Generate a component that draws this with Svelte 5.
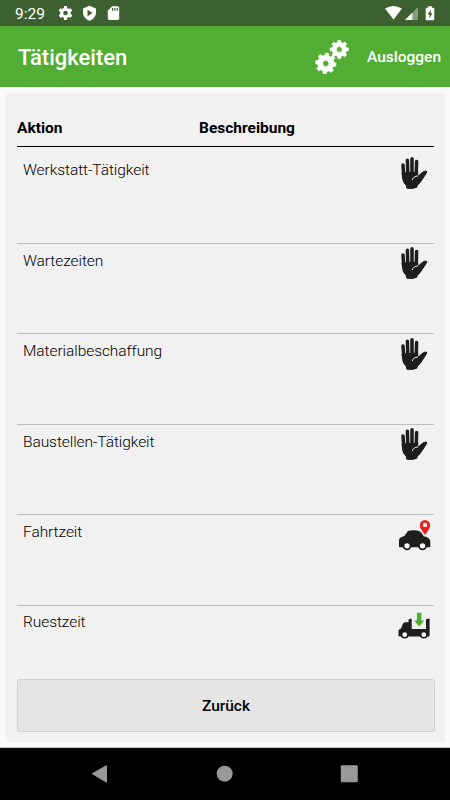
<script>
  const rows = [
    { label: 'Werkstatt-Tätigkeit', icon: 'hand' },
    { label: 'Wartezeiten', icon: 'hand' },
    { label: 'Materialbeschaffung', icon: 'hand' },
    { label: 'Baustellen-Tätigkeit', icon: 'hand' },
    { label: 'Fahrtzeit', icon: 'car' },
    { label: 'Ruestzeit', icon: 'truck' }
  ];

  // Outline of a gear with n teeth and a round hole in the middle
  function gear(cx, cy, outer, inner, hole, n, turn = 0) {
    const step = (Math.PI * 2) / n;
    const pts = [];
    for (let i = 0; i < n; i++) {
      for (const [r, a] of [[inner, -0.3], [outer, -0.2], [outer, 0.2], [inner, 0.3]]) {
        const t = turn + (i + a) * step;
        pts.push(`${(cx + r * Math.cos(t)).toFixed(2)} ${(cy + r * Math.sin(t)).toFixed(2)}`);
      }
    }
    return `M${pts.join('L')}ZM${cx - hole} ${cy}a${hole} ${hole} 0 1 0 ${hole * 2} 0a${hole} ${hole} 0 1 0 ${-hole * 2} 0Z`;
  }
</script>

<div class="screen">
  <div class="status">
    <span class="time">9:29</span>
    <svg class="left-icons" width="64" height="16" viewBox="0 0 64 16" fill="#fff" fill-rule="evenodd">
      <path d={gear(7.5, 8, 7.1, 5.3, 2.3, 6, Math.PI / 6)} />
      <path d="M31.5 .8L38 3.4V7.6C38 11.4 35.2 14.5 31.5 15.8C27.8 14.5 25 11.4 25 7.6V3.4ZM29.5 4.8V11.2L34.6 8Z" />
      <path d="M54.3 1.3H59.7Q61.2 1.3 61.2 2.8V13.6Q61.2 15 59.7 15H51.3Q49.8 15 49.8 13.6V5.4ZM54 3V5.8H55.2V3ZM56.3 3V5.8H57.5V3ZM58.6 3V5.8H59.8V3Z" />
    </svg>
    <svg class="right-icons" width="52" height="16" viewBox="0 0 52 16" fill="#fff">
      <path d="M0 3.4Q8.5 -1.6 17 3.4L8.5 14.4Z" />
      <path d="M33 2V15H20Z" opacity=".38" />
      <path d="M27.3 7.7V15H20Z" />
      <path fill-rule="evenodd" d="M43.2 1.3H46.8V2.7H48.3Q49.3 2.7 49.3 3.7V14.3Q49.3 15.3 48.3 15.3H41.7Q40.7 15.3 40.7 14.3V3.7Q40.7 2.7 41.7 2.7H43.2ZM45.7 4.8L42.6 9.6H44.5V13.2L47.5 8.2H45.7Z" />
    </svg>
  </div>

  <header>
    <h1>Tätigkeiten</h1>
    <svg width="36" height="36" viewBox="0 0 36 36" fill="#fff" fill-rule="evenodd" stroke="#fff" stroke-width=".7" stroke-linejoin="round">
      <path d={gear(11.8, 24.4, 10.3, 8.1, 3.1, 8, 0.12)} />
      <path d={gear(25.3, 10.4, 9.1, 7.1, 2.9, 8, 0)} />
    </svg>
    <span class="logout">Ausloggen</span>
  </header>

  <main>
    <section class="panel">
      <div class="head"><span class="c1">Aktion</span><span>Beschreibung</span></div>
      <div class="list">
        {#each rows as row}
          <div class="row">
            <span class="label">{row.label}</span>
            {#if row.icon === 'hand'}
              <svg class="icon" width="36" height="36" viewBox="0 0 36 36" fill="none" stroke="#1d1d1b" stroke-linecap="round" stroke-linejoin="round">
                <path stroke-width="3.5" d="M7 10L7.8 22M11.4 5.3L11.8 19M16 3.7V19M20.6 6.5L20.3 19" />
                <path fill="#1d1d1b" stroke-width="1" d="M6.5 18L21.7 17V20.8Q23.5 20.4 25 18.6Q27.8 15.6 30.3 16Q31.5 16.6 30 18.6L26.2 24.4Q24.3 28 21.3 30.2L20.8 32.2Q17 34.2 10.8 33.2L10.2 30.2Q6.6 27.6 6.5 22Z" />
                <path stroke="#f1f1f1" stroke-width="1" d="M21.8 20.9Q17.2 21.3 16.4 24.6" />
              </svg>
            {:else if row.icon === 'car'}
              <svg class="icon" width="36" height="36" viewBox="0 0 36 36" fill="#1d1d1b">
                <g transform="translate(0 2.5)">
                  <path d="M3 27V21Q3 18 6 17.5Q9 16.8 10.3 13.8Q11.4 11.4 14 11.1Q19.5 10.3 23.7 11.8Q26 13.1 27.7 16.8Q34.3 18 34.3 22V26.7Q34.3 27.8 33.2 27.8H4Q3 27.8 3 27Z" />
                  <circle cx="11" cy="26.3" r="3.5" fill="#fff" stroke="#1d1d1b" stroke-width="1.7" />
                  <circle cx="26.5" cy="26.3" r="3.5" fill="#fff" stroke="#1d1d1b" stroke-width="1.7" />
                </g>
                <path transform="translate(0 1.5)" fill="#e52421" fill-rule="evenodd" d="M29 16.4Q23.8 10.2 23.8 6.8A5.2 5.2 0 0 1 34.2 6.8Q34.2 10.2 29 16.4ZM29 4.2A2.2 2.2 0 1 0 29 8.6A2.2 2.2 0 1 0 29 4.2Z" />
              </svg>
            {:else}
              <svg class="icon" width="36" height="36" viewBox="0 -2.6 36 36" fill="#1d1d1b">
                <path d="M2.5 26V21.5Q2.5 19.9 4.1 19.3L5 18.8L6.8 14.5Q7.5 12.7 9.3 12.7H12.5V10.8Q12.5 9.2 14 9.2H15.7V19.3H30V10.5Q30 9.2 31.5 9.2H33.6V26Q33.6 27 32.6 27H3.5Q2.5 27 2.5 26Z" />
                <path fill="#4db02e" d="M20.9 3.2H25.4V11H28.3L23.2 17L18.2 11H20.9Z" />
                <circle cx="8.7" cy="25.1" r="3.1" fill="#fff" stroke="#1d1d1b" stroke-width="1.5" />
                <circle cx="27.8" cy="25.1" r="3.1" fill="#fff" stroke="#1d1d1b" stroke-width="1.5" />
              </svg>
            {/if}
          </div>
        {/each}
      </div>
      <button>Zurück</button>
    </section>
  </main>

  <nav>
    <svg width="450" height="52" viewBox="0 0 450 52" fill="#999">
      <path d="M91.5 25.8L106.2 17.2Q107 17 107 18V33.7Q107 34.8 106.2 34.5Z" />
      <circle cx="224.7" cy="25.7" r="8" />
      <rect x="340.8" y="17.3" width="17" height="17" rx="1" />
    </svg>
  </nav>
</div>

<style>
  :global(body) { margin: 0; }
  .screen {
    width: 450px; height: 800px; display: flex; flex-direction: column;
    font-family: Roboto, sans-serif; background: #fafafa; color: #000; overflow: hidden;
  }
  .status {
    height: 26px; flex: none; box-sizing: border-box; padding: 0 13px 0 15px;
    display: flex; align-items: center; background: #3d6030; color: #fff;
  }
  .time { width: 43px; font-size: 15.5px; font-weight: 400; line-height: 26px; padding-top: 1px; }
  .right-icons { margin-left: auto; }
  header {
    height: 61px; flex: none; box-sizing: border-box; padding: 2px 9px 0 18px;
    display: flex; align-items: center; background: #51ae32; color: #fff;
  }
  h1 { margin: 0; flex: 1; font-size: 22px; font-weight: 500; line-height: 28px; }
  header svg { flex: none; margin-right: 17px; margin-top: -2px; }
  .logout { font-size: 15.5px; font-weight: 500; width: 74px; line-height: 20px; padding-bottom: 1px; white-space: nowrap; }
  main { height: 661px; flex: none; padding: 6px 5px 5px 6px; box-sizing: border-box; border-bottom: 1px solid #c8c8c8; }
  .panel { height: 649px; box-sizing: border-box; padding: 12px 11px 0; background: #f1f1f1; }
  .head {
    height: 42px; box-sizing: border-box; border-bottom: 1px solid #000;
    display: flex; font-size: 15.5px; font-weight: 700; line-height: 47px;
  }
  .c1 { width: 182px; }
  .list { height: 532px; overflow: hidden; padding-top: 6.6px; box-sizing: border-box; }
  .row {
    height: 90.45px; box-sizing: border-box; border-bottom: 1px solid #bdbdbd;
    display: flex; justify-content: space-between; padding: 0 2px 0 6px;
  }
  .label { font-size: 15.5px; font-weight: 300; line-height: 20px; padding-top: 6.6px; letter-spacing: -.07px; }
  .icon { flex: none; margin-top: 1.4px; }
  button {
    display: block; width: 418px; height: 53px; padding: 0; border: 1px solid #d1d1d1; border-radius: 3px;
    background: #e5e5e5; color: #000; font: 500 15.5px Roboto, sans-serif;
  }
  nav { height: 52px; flex: none; background: #000; }
  nav svg { display: block; }
</style>
